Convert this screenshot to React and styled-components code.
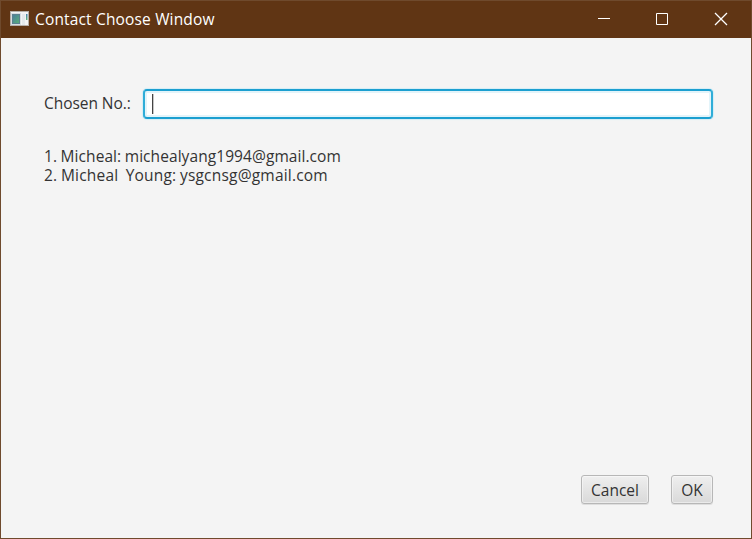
import React from "react";
import styled, { createGlobalStyle } from "styled-components";

const GlobalStyle = createGlobalStyle`
  * { box-sizing: border-box; }
  body { margin: 0; overflow: hidden; }
`;

const Window = styled.div`
  width: 752px;
  height: 539px;
  display: flex;
  flex-direction: column;
  background: #f4f4f4;
  border: 1px solid #6f4a2d;
  font-family: "Open Sans", "Noto Sans", sans-serif;
  font-size: 15.5px;
  color: #333;
`;

const TitleBar = styled.header`
  height: 37px;
  flex: none;
  display: flex;
  align-items: flex-start;
  padding: 0 0 0 9px;
  background: #603514;
  color: #fff;
`;

const Title = styled.h1`
  flex: 1;
  margin: 8px 0 0 5px;
  font-size: inherit;
  font-weight: 400;
  line-height: 20px;
`;

const Text = styled.span`
  white-space: pre;
  letter-spacing: ${(p) => p.$spacing || 0}px;
`;

const WindowButton = styled.button`
  width: ${(p) => p.$width || 58}px;
  height: 36px;
  padding: 0;
  border: 0;
  background: transparent;
  display: flex;
  align-items: center;
  justify-content: center;
`;

const Content = styled.main`
  flex: 1;
  display: flex;
  flex-direction: column;
  padding: 51px 38px 34px 43px;
`;

const Field = styled.div`
  display: flex;
  align-items: flex-start;
  height: 30px;
`;

const Label = styled.label`
  width: 99px;
  margin-top: 4px;
  line-height: 20px;
`;

const Input = styled.div`
  flex: 1;
  height: 30px;
  padding: 3px 7px;
  border: 2px solid #2fadd8;
  border-top-color: #1b9fd0;
  border-bottom-color: #1b9fd0;
  border-radius: 4px;
  background: #fff;
  box-shadow: 0 0 1px 1px #d5edf5, inset 0 0 0 2px #e3f4fa;
`;

const Caret = styled.div`
  width: 1px;
  height: 20px;
  background: #444;
  box-shadow: 1px 0 0 #c5c5c5;
`;

const Contacts = styled.ol`
  list-style: none;
  margin: 28px 0 0;
  padding: 0;
  word-spacing: -0.6px;
`;

const Contact = styled.li`
  height: 19px;
  line-height: 19px;
`;

const Actions = styled.footer`
  margin-top: auto;
  display: flex;
  justify-content: flex-end;
  gap: 22px;
`;

const Button = styled.button`
  width: ${(p) => p.$width}px;
  height: 29px;
  padding: 0;
  border: 1px solid #b7b7b7;
  border-radius: 3px;
  background: linear-gradient(#efefef, #d9d9d9);
  box-shadow: inset 0 0 0 1px rgba(255, 255, 255, 0.45), 0 1px 0 #dedede;
  color: #333;
  font: inherit;
  line-height: 20px;
`;

const IconSvg = styled.svg`
  margin-top: 10px;
`;

const AppIcon = () => (
  <IconSvg width="20" height="16" viewBox="0 0 20 16">
    <defs>
      <linearGradient id="screen" x1="0" y1="0" x2="1" y2="1">
        <stop offset="0" stopColor="#4a7c9e" />
        <stop offset="1" stopColor="#58b078" />
      </linearGradient>
      <linearGradient id="strip" x1="0" y1="0" x2="0" y2="1">
        <stop offset="0" stopColor="#4a7fae" />
        <stop offset="1" stopColor="#62b67c" />
      </linearGradient>
    </defs>
    <rect x="0.5" y="0.5" width="18" height="14" fill="#f3f4f5" stroke="#b5aea8" />
    <rect x="1.5" y="2.5" width="9" height="11" fill="#fff" stroke="#d5dde2" />
    <rect x="2.5" y="3.5" width="7" height="9" fill="url(#screen)" stroke="#5c8190" />
    <rect x="12" y="3" width="3" height="11" fill="#e4e9ec" />
    <rect x="16" y="3" width="1.5" height="6" fill="url(#strip)" />
  </IconSvg>
);

const Glyph = ({ children }) => (
  <svg width="14" height="14" viewBox="0 0 14 14" fill="none" stroke="#fff">
    {children}
  </svg>
);

export default function App() {
  return (
    <Window>
      <GlobalStyle />
      <TitleBar>
        <AppIcon />
        <Title><Text $spacing={0.16}>Contact Choose Window</Text></Title>
        <WindowButton aria-label="Minimize">
          <Glyph><path d="M1 6.5h12" /></Glyph>
        </WindowButton>
        <WindowButton aria-label="Maximize">
          <Glyph><path d="M1.5 1.5h11v11h-11z" /></Glyph>
        </WindowButton>
        <WindowButton aria-label="Close" $width={60}>
          <Glyph><path d="M1 1l12 12M13 1L1 13" strokeWidth="1.3" /></Glyph>
        </WindowButton>
      </TitleBar>
      <Content>
        <Field>
          <Label><Text $spacing={-0.05}>Chosen No.:</Text></Label>
          <Input><Caret /></Input>
        </Field>
        <Contacts>
          <Contact><Text $spacing={0.07}>1. Micheal: michealyang1994@gmail.com</Text></Contact>
          <Contact><Text $spacing={0.2}>{"2. Micheal  Young: ysgcnsg@gmail.com"}</Text></Contact>
        </Contacts>
        <Actions>
          <Button $width={68}><Text>Cancel</Text></Button>
          <Button $width={42}><Text>OK</Text></Button>
        </Actions>
      </Content>
    </Window>
  );
}
